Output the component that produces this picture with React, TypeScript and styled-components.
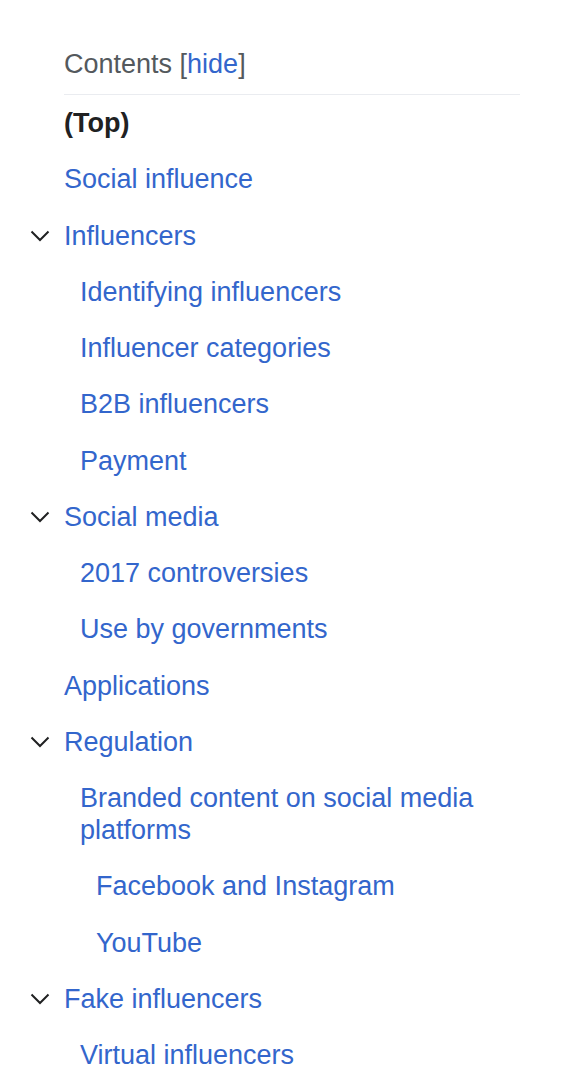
import React from "react";
import styled, { createGlobalStyle } from "styled-components";

const GlobalStyle = createGlobalStyle`
  html, body {
    margin: 0;
    padding: 0;
    background: #ffffff;
  }
  body {
    font-family: "Liberation Sans", Arial, sans-serif;
  }
`;

const Toc = styled.nav`
  padding: 0 0 0 28px;
  width: 492px;
  font-size: 27px;
  line-height: 32px;
`;

const Header = styled.div`
  margin-left: 36px;
  padding: 48px 0 14px;
  border-bottom: 1px solid #eaecf0;
  color: #54595d;
`;

const HideLink = styled.a`
  color: #3366cc;
  text-decoration: none;
`;

const List = styled.ul`
  list-style: none;
  margin: 0;
  padding: 0;
`;

const SubList = styled.ul<{ $indent: number }>`
  list-style: none;
  margin: 0;
  padding: 0 0 0 ${({ $indent }) => $indent}px;
`;

const Row = styled.div`
  display: flex;
  align-items: flex-start;
  padding: 12.125px 0;
`;

const Toggle = styled.span`
  flex: 0 0 36px;
  height: 32px;
  display: flex;
  align-items: center;
  padding-left: 2px;
  box-sizing: border-box;
  color: #202122;
`;

const Label = styled.a<{ $current?: boolean }>`
  color: ${({ $current }) => ($current ? "#202122" : "#3366cc")};
  font-weight: ${({ $current }) => ($current ? 700 : 400)};
  text-decoration: none;
`;

const Chevron = () => (
  <svg width="20" height="12" viewBox="0 0 20 12" fill="none">
    <path d="M1.5 1.5 L10 10 L18.5 1.5" stroke="currentColor" strokeWidth="2" />
  </svg>
);

interface Entry {
  title: string;
  current?: boolean;
  children?: Entry[];
}

const entries: Entry[] = [
  { title: "(Top)", current: true },
  { title: "Social influence" },
  {
    title: "Influencers",
    children: [
      { title: "Identifying influencers" },
      { title: "Influencer categories" },
      { title: "B2B influencers" },
      { title: "Payment" },
    ],
  },
  {
    title: "Social media",
    children: [{ title: "2017 controversies" }, { title: "Use by governments" }],
  },
  { title: "Applications" },
  {
    title: "Regulation",
    children: [
      {
        title: "Branded content on social media platforms",
        children: [{ title: "Facebook and Instagram" }, { title: "YouTube" }],
      },
    ],
  },
  {
    title: "Fake influencers",
    children: [{ title: "Virtual influencers" }],
  },
];

function SubItem({ entry }: { entry: Entry }) {
  return (
    <li>
      <Row>
        <Label href="#">{entry.title}</Label>
      </Row>
      {entry.children && (
        <SubList $indent={16}>
          {entry.children.map((c) => (
            <SubItem key={c.title} entry={c} />
          ))}
        </SubList>
      )}
    </li>
  );
}

function TopItem({ entry }: { entry: Entry }) {
  return (
    <li>
      <Row>
        <Toggle>{entry.children && <Chevron />}</Toggle>
        <Label href="#" $current={entry.current}>
          {entry.title}
        </Label>
      </Row>
      {entry.children && (
        <SubList $indent={52}>
          {entry.children.map((c) => (
            <SubItem key={c.title} entry={c} />
          ))}
        </SubList>
      )}
    </li>
  );
}

export default function App() {
  return (
    <>
      <GlobalStyle />
      <Toc>
        <Header>
          Contents [<HideLink href="#">hide</HideLink>]
        </Header>
        <List>
          {entries.map((e) => (
            <TopItem key={e.title} entry={e} />
          ))}
        </List>
      </Toc>
    </>
  );
}
